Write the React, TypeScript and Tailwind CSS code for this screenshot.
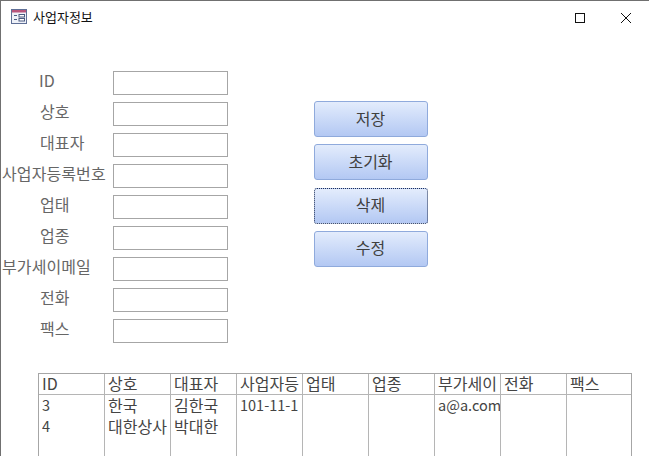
import React from "react";

const FONT = "font-['Noto_Sans_CJK_KR','Noto_Sans',sans-serif]";

const fields = [
  { label: "ID", indent: "pl-[38px]" },
  { label: "상호", indent: "pl-[39px]" },
  { label: "대표자", indent: "pl-[39px]" },
  { label: "사업자등록번호", indent: "pl-[1px]" },
  { label: "업태", indent: "pl-[39px]" },
  { label: "업종", indent: "pl-[39px]" },
  { label: "부가세이메일", indent: "pl-[1px]" },
  { label: "전화", indent: "pl-[39px]" },
  { label: "팩스", indent: "pl-[39px]" },
];

const buttons = ["저장", "초기화", "삭제", "수정"];

const columns = ["ID", "상호", "대표자", "사업자등", "업태", "업종", "부가세이", "전화", "팩스"];

const rows = [
  ["3", "한국", "김한국", "101-11-1", "", "", "a@a.com", "", ""],
  ["4", "대한상사", "박대한", "", "", "", "", "", ""],
];

const isLatin = (s: string) => /^[\x00-\x7f]*$/.test(s);

const FormIcon = () => (
  <svg width="16" height="15" viewBox="0 0 16 15" className="shrink-0">
    <rect x="0.5" y="0.5" width="15" height="14" fill="#eef1f8" stroke="#5f6f96" />
    <rect x="1" y="1" width="14" height="2.5" fill="#b8557c" />
    <path d="M3 6.5h3M3 10.5h3" stroke="#4a5a80" strokeWidth="1" />
    <rect x="8" y="5.5" width="5.5" height="2.5" fill="#fff" stroke="#4a5a80" strokeWidth="1" />
    <rect x="8" y="9.5" width="5.5" height="2.5" fill="#fff" stroke="#4a5a80" strokeWidth="1" />
  </svg>
);

export default function App() {
  return (
    <div className={`${FONT} w-[649px] h-[456px] overflow-hidden bg-white border-l border-t border-[#707070] flex flex-col`}>
      <div className="h-[35px] shrink-0 flex items-center">
        <div className="flex items-center pl-[10px] gap-[6px] -mt-[4px]">
          <FormIcon />
          <span className="text-[13px] leading-none text-[#111] whitespace-nowrap">사업자정보</span>
        </div>
        <div className="ml-auto flex items-center pr-[17px] gap-[35px] -mt-[2px]">
          <svg width="10" height="10" viewBox="0 0 10 10">
            <rect x="0.5" y="0.5" width="9" height="9" fill="none" stroke="#111" />
          </svg>
          <svg width="12" height="12" viewBox="0 0 12 12">
            <path d="M1 1l10 10M11 1L1 11" stroke="#111" strokeWidth="1" />
          </svg>
        </div>
      </div>

      <div className="flex mt-[35px]">
        <div className="w-[227px] flex flex-col gap-[7px] shrink-0">
          {fields.map((f) => (
            <div key={f.label} className={`flex items-center h-[24px] ${f.indent}`}>
              <span className="text-[16px] leading-none tracking-[0.1px] text-[#666] whitespace-nowrap -mt-[7px]">{f.label}</span>
              <div className="ml-auto w-[115px] h-[24px] border border-[#a6a6a6] bg-white shrink-0" />
            </div>
          ))}
        </div>
        <div className="ml-[86px] mt-[30px] flex flex-col gap-[7.33px]">
          {buttons.map((b) => (
            <button
              key={b}
              className={`w-[114px] h-[36px] pb-[3px] pr-[1px] rounded-[3px] bg-gradient-to-b from-[#e3ecfc] to-[#b3c8f3] text-[16px] leading-none text-[#404040] border ${
                b === "삭제" ? "border-dotted border-[#1f2f55]" : "border-[#8faadc]"
              }`}
            >
              {b}
            </button>
          ))}
        </div>
      </div>

      <div className="mt-[30px] ml-[37px] w-[594px] shrink-0 border-t border-l border-r border-[#a6a6a6]">
        <div className="grid grid-cols-[66px_66px_66px_66px_66px_66px_66px_66px_1fr] h-[21px] border-b border-[#b5b5b5]">
          {columns.map((c, i) => (
            <div key={c} className={`pl-[3px] text-[16px] leading-[19px] text-[#444] whitespace-nowrap overflow-hidden ${i < 8 ? "border-r border-[#b5b5b5]" : ""}`}>
              {c}
            </div>
          ))}
        </div>
        <div className="grid grid-cols-[66px_66px_66px_66px_66px_66px_66px_66px_1fr] h-[70px]">
          {columns.map((c, i) => (
            <div key={c} className={`pl-[3px] ${i < 8 ? "border-r border-[#b5b5b5]" : ""}`}>
              {rows.map((r) => (
                <div
                  key={r[0]}
                  className={`h-[21px] leading-[20px] text-[#444] whitespace-nowrap overflow-hidden ${
                    isLatin(r[i]) ? "text-[14.5px]" : "text-[16px]"
                  }`}
                >
                  {r[i]}
                </div>
              ))}
            </div>
          ))}
        </div>
      </div>
    </div>
  );
}
